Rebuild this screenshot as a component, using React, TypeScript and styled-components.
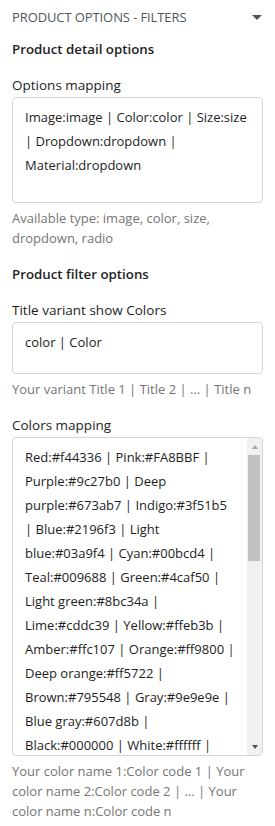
import styled, { createGlobalStyle } from "styled-components";

const GlobalStyle = createGlobalStyle`
  html, body {
    margin: 0;
    padding: 0;
    background: #ffffff;
  }
  body {
    font-family: "Open Sans", "Noto Sans", sans-serif;
    color: #1e1e1e;
  }
  * {
    box-sizing: border-box;
  }
`;

const colorsValue =
  "Red:#f44336 | Pink:#FA8BBF | Purple:#9c27b0 | Deep purple:#673ab7 | Indigo:#3f51b5 | Blue:#2196f3 | Light blue:#03a9f4 | Cyan:#00bcd4 | Teal:#009688 | Green:#4caf50 | Light green:#8bc34a | Lime:#cddc39 | Yellow:#ffeb3b | Amber:#ffc107 | Orange:#ff9800 | Deep orange:#ff5722 | Brown:#795548 | Gray:#9e9e9e | Blue gray:#607d8b | Black:#000000 | White:#ffffff |";

function App() {
  return (
    <>
      <GlobalStyle />
      <Panel>
        <SectionHeader>
          <SectionTitle>Product Options - Filters</SectionTitle>
          <Caret />
        </SectionHeader>

        <GroupTitle>Product detail options</GroupTitle>
        <Field>
          <Label>Options mapping</Label>
          <TextArea
            $height={106}
            defaultValue="Image:image | Color:color | Size:size | Dropdown:dropdown | Material:dropdown"
          />
          <Hint>Available type: image, color, size, dropdown, radio</Hint>
        </Field>

        <GroupTitle>Product filter options</GroupTitle>
        <Field>
          <Label>Title variant show Colors</Label>
          <TextArea $height={52} defaultValue="color | Color" />
          <Hint>Your variant Title 1 | Title 2 | ... | Title n</Hint>
        </Field>
        <Field>
          <Label>Colors mapping</Label>
          <ScrollBox>
            <TextArea $height={319} $withBar defaultValue={colorsValue} />
            <ScrollBar aria-hidden>
              <ScrollButton>
                <Arrow $dir="up" />
              </ScrollButton>
              <Thumb $size={106} />
              <ScrollTrack />
              <ScrollButton>
                <Arrow $dir="down" />
              </ScrollButton>
            </ScrollBar>
          </ScrollBox>
          <Hint>
            Your color name 1:Color code 1 | Your color name 2:Color code 2 | ... | Your color
            name n:Color code n
          </Hint>
        </Field>
      </Panel>
    </>
  );
}

const Panel = styled.div`
  width: 275px;
  padding: 7px 12px 12px;
  display: flex;
  flex-direction: column;
`;

const SectionHeader = styled.div`
  display: flex;
  align-items: center;
  justify-content: space-between;
  height: 20px;
  margin-bottom: 12px;
`;

const SectionTitle = styled.span`
  font-size: 13px;
  text-transform: uppercase;
  color: #50575e;
  letter-spacing: -0.1px;
`;

const Caret = styled.span`
  width: 0;
  height: 0;
  margin-right: 1px;
  border-left: 5px solid transparent;
  border-right: 5px solid transparent;
  border-top: 5px solid #555555;
`;

const GroupTitle = styled.h3`
  margin: 0 0 16px;
  font-size: 13.3px;
  font-weight: 600;
  line-height: 20px;
  color: #1e1e1e;
`;

const Field = styled.div`
  display: flex;
  flex-direction: column;
  margin-bottom: 16px;
`;

const Label = styled.label`
  font-size: 13.5px;
  line-height: 20px;
  margin-bottom: 2px;
  color: #1e1e1e;
`;

const TextArea = styled.textarea<{ $height: number; $withBar?: boolean }>`
  display: block;
  width: 100%;
  height: ${(p) => p.$height}px;
  padding: 7px ${(p) => (p.$withBar ? 27 : 12)}px 7px 12px;
  border: 1px solid #d5d5d5;
  border-radius: 4px;
  font-family: "Open Sans", "Noto Sans", sans-serif;
  font-size: 13px;
  line-height: 24px;
  color: #1e1e1e;
  resize: none;
  outline: none;
  overflow: hidden;
`;

const ScrollBox = styled.div`
  position: relative;
`;

const ScrollBar = styled.div`
  position: absolute;
  top: 1px;
  right: 1px;
  bottom: 1px;
  width: 15px;
  display: flex;
  flex-direction: column;
  background: #f1f1f1;
  border-radius: 0 3px 3px 0;
`;

const ScrollButton = styled.div`
  height: 17px;
  display: flex;
  align-items: center;
  justify-content: center;
`;

const Arrow = styled.span<{ $dir: "up" | "down" }>`
  width: 0;
  height: 0;
  border-left: 3.5px solid transparent;
  border-right: 3.5px solid transparent;
  ${(p) =>
    p.$dir === "up" ? "border-bottom: 4px solid #a3a3a3;" : "border-top: 4px solid #505050;"}
`;

const Thumb = styled.div<{ $size: number }>`
  height: ${(p) => p.$size}px;
  margin: 0 2px 0 1px;
  background: #c1c1c1;
`;

const ScrollTrack = styled.div`
  flex: 1;
`;

const Hint = styled.p`
  margin: 5px 0 0;
  font-size: 13px;
  line-height: 20px;
  color: #757575;
`;

export default App;
